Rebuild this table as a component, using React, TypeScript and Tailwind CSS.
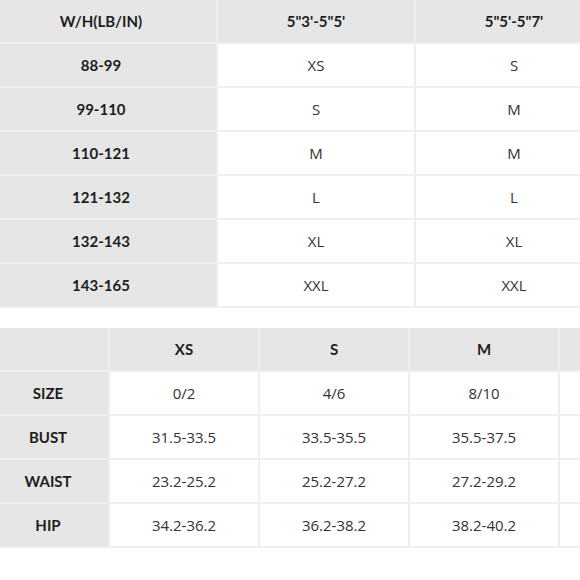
const heightRows = [
  ['88-99', 'XS', 'S'],
  ['99-110', 'S', 'M'],
  ['110-121', 'M', 'M'],
  ['121-132', 'L', 'L'],
  ['132-143', 'XL', 'XL'],
  ['143-165', 'XXL', 'XXL'],
]

const measureRows = [
  ['SIZE', '0/2', '4/6', '8/10'],
  ['BUST', '31.5-33.5', '33.5-35.5', '35.5-37.5'],
  ['WAIST', '23.2-25.2', '25.2-27.2', '27.2-29.2'],
  ['HIP', '34.2-36.2', '36.2-38.2', '38.2-40.2'],
]

const head = "flex items-center justify-center bg-[#e6e6e6] text-[15px] font-bold text-[#1e1e1e] font-['Lato','Liberation_Sans',sans-serif]"
const cell = "flex items-center justify-center bg-white text-[15px] text-[#333] font-['Open_Sans','Liberation_Sans',sans-serif]"

export default function App() {
  return (
    <div className="w-[580px] h-[580px] overflow-hidden bg-white">
      {/* Weight / height chart */}
      <div className="ml-[-14px] w-[628px] grid grid-cols-[230px_196px_196px] auto-rows-[42px] gap-[2px] pb-[2px] bg-[#efefef]">
        <div className={head}>W/H(LB/IN)</div>
        <div className={head}>5"3'-5"5'</div>
        <div className={head}>5"5'-5"7'</div>
        {heightRows.map(r => (
          <>
            <div key={r[0]} className={head}>{r[0]}</div>
            <div className={cell}>{r[1]}</div>
            <div className={cell}>{r[2]}</div>
          </>
        ))}
      </div>

      {/* Body measurements, last column runs off the edge */}
      <div className="mt-[20px] ml-[-12px] w-[720px] grid grid-cols-[120px_148px_148px_148px_148px] auto-rows-[42px] gap-[2px] pb-[2px] bg-[#efefef]">
        <div className={head}></div>
        <div className={head}>XS</div>
        <div className={head}>S</div>
        <div className={head}>M</div>
        <div className={head}></div>
        {measureRows.map(r => (
          <>
            <div key={r[0]} className={head}>{r[0]}</div>
            {r.slice(1).map((v, i) => (
              <div key={i} className={cell}>{v}</div>
            ))}
            <div className={cell}></div>
          </>
        ))}
      </div>
    </div>
  )
}
